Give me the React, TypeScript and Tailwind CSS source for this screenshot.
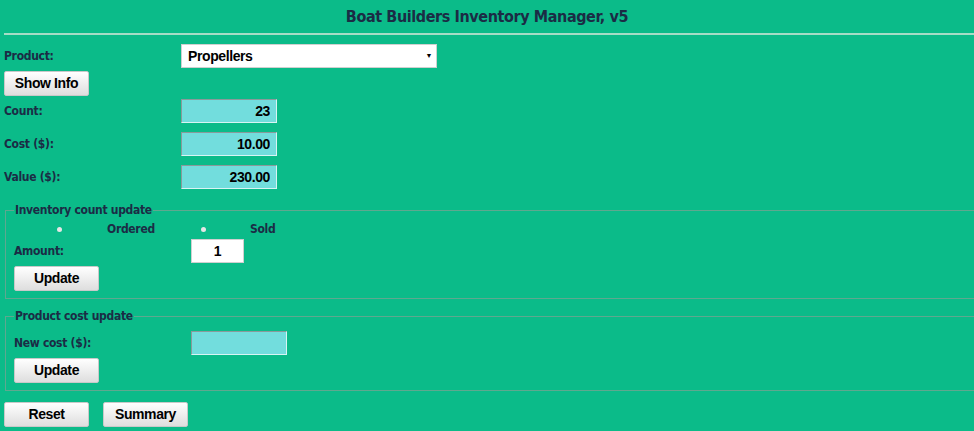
const label =
  "font-['DejaVu_Sans_Condensed','DejaVu_Sans',Verdana,sans-serif] font-bold text-[12px] tracking-[-0.3px] leading-[14px] text-[#1b2c45]";
const arial = "font-['Liberation_Sans',Arial,sans-serif] font-bold text-[14px] tracking-[-0.4px] text-black";
const btn = `h-[25px] w-[85px] rounded-[2px] border border-[#c9c9c9] bg-gradient-to-b from-white to-[#dedede] ${arial}`;
const field = `h-[24px] border border-t-[#8a9a9a] border-l-[#8a9a9a] border-b-[#d8f4f4] border-r-[#d8f4f4] px-[6px] ${arial} outline-none`;

function Row({ name, value }: { name: string; value: string }) {
  return (
    <div className="flex h-[24px] items-center">
      <span className={`${label} w-[177px]`}>{name}</span>
      <input
        readOnly
        value={value}
        className={`${field} w-[96px] bg-[#72dddd] text-right`}
      />
    </div>
  );
}

export default function App() {
  return (
    <div className="h-[431px] w-[974px] overflow-hidden bg-[#0bbb89]">
      <h1 className="pt-[8px] text-center font-['DejaVu_Sans_Condensed','DejaVu_Sans',Verdana,sans-serif] text-[16px] tracking-[-0.4px] font-bold leading-[18px] text-[#1b2c45]">
        Boat Builders Inventory Manager, v5
      </h1>
      <div className="ml-[4px] mt-[7px] h-[2px] bg-[#a6dcc6]" />

      <div className="px-[4px]">
        <div className="mt-[9px] flex h-[24px] items-center">
          <span className={`${label} w-[177px]`}>Product:</span>
          <div className={`relative flex h-[24px] w-[256px] items-center border border-[#d0d0d0] bg-white pl-[6px] ${arial}`}>
            Propellers
            <span className="absolute right-[4px] top-[7px] text-[7px] leading-none">▼</span>
          </div>
        </div>

        <button className={`${btn} mt-[3px]`}>Show Info</button>

        <div className="mt-[3px] flex flex-col gap-[9px]">
          <Row name="Count:" value="23" />
          <Row name="Cost ($):" value="10.00" />
          <Row name="Value ($):" value="230.00" />
        </div>

        <fieldset className="mt-[14px] ml-[1px] -mr-[20px] h-[96px] border border-[#5fa88f] pl-[8px] pt-[4px]">
          <legend className={`${label} px-[1px]`}>Inventory count update</legend>
          <div className="flex h-[16px] items-center">
            <span className="ml-[43px] h-[5px] w-[5px] rounded-full bg-[#e6e6e6]" />
            <span className={`${label} ml-[45px] w-[94px]`}>Ordered</span>
            <span className="h-[5px] w-[5px] rounded-full bg-[#e6e6e6]" />
            <span className={`${label} ml-[44px]`}>Sold</span>
          </div>
          <div className="mt-[2px] flex h-[24px] items-center">
            <span className={`${label} w-[177px]`}>Amount:</span>
            <input
              readOnly
              value="1"
              className={`h-[24px] w-[53px] border border-[#d0d0d0] bg-white text-center ${arial} outline-none`}
            />
          </div>
          <button className={`${btn} mt-[3px]`}>Update</button>
        </fieldset>

        <fieldset className="mt-[10px] ml-[1px] -mr-[20px] h-[82px] border border-[#5fa88f] pl-[8px]">
          <legend className={`${label} px-[1px]`}>Product cost update</legend>
          <div className="mt-[8px] flex h-[24px] items-center">
            <span className={`${label} w-[177px]`}>New cost ($):</span>
            <input readOnly value="" className={`${field} w-[96px] bg-[#72dddd]`} />
          </div>
          <button className={`${btn} mt-[3px]`}>Update</button>
        </fieldset>

        <div className="mt-[11px] flex gap-[14px]">
          <button className={btn}>Reset</button>
          <button className={btn}>Summary</button>
        </div>
      </div>
    </div>
  );
}
